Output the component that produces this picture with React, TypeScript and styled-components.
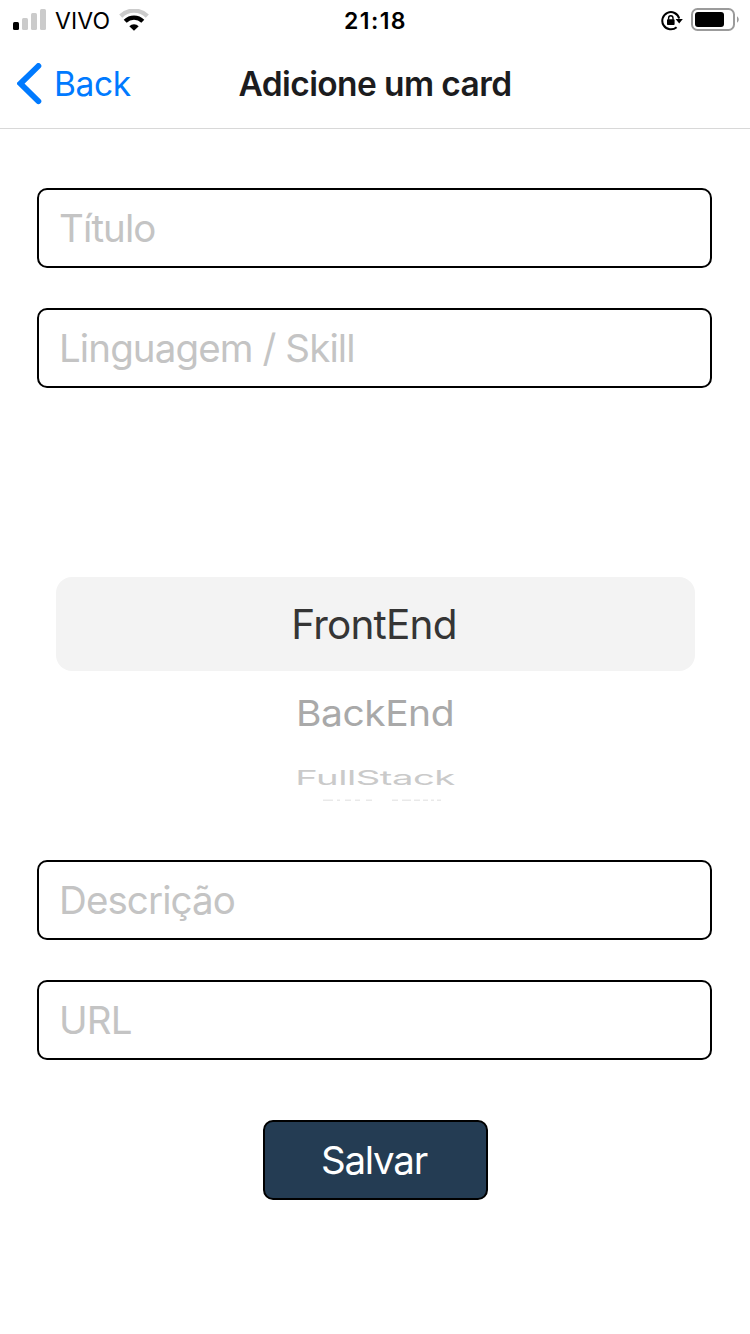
import React from "react";
import styled, { createGlobalStyle } from "styled-components";

const GlobalStyle = createGlobalStyle`
  * { box-sizing: border-box; }
  body {
    margin: 0;
    background: #fff;
    font-family: Inter, "Liberation Sans", sans-serif;
  }
`;

const Screen = styled.div`
  width: 750px;
  height: 1334px;
  display: flex;
  flex-direction: column;
  background: #fff;
  overflow: hidden;
`;

const StatusBar = styled.header`
  height: 40px;
  display: grid;
  grid-template-columns: 1fr auto 1fr;
  align-items: center;
  padding: 0 11px 0 13px;
  color: #000;
`;

const StatusGroup = styled.div<{ $end?: boolean }>`
  display: flex;
  align-items: center;
  justify-content: ${(p) => (p.$end ? "flex-end" : "flex-start")};
  gap: ${(p) => (p.$end ? 8 : 9)}px;
`;

const Carrier = styled.span`
  padding-top: 2px;
  font-size: 23px;
  line-height: 38px;
  letter-spacing: 0.1px;
`;

const Clock = styled.time`
  padding: 2px 1px 0 0;
  font-size: 23px;
  font-weight: 600;
  line-height: 38px;
  letter-spacing: 1.4px;
`;

const NavBar = styled.nav`
  height: 89px;
  display: grid;
  grid-template-columns: 1fr auto 1fr;
  align-items: center;
  padding: 0 17px 1px;
  border-bottom: 1px solid #d8d8d8;
`;

const BackButton = styled.button`
  display: flex;
  align-items: center;
  gap: 12px;
  padding: 0;
  border: 0;
  background: none;
  color: #007aff;
  font: 400 33.5px/44px Inter, sans-serif;
  letter-spacing: -0.4px;
`;

const Title = styled.h1`
  margin: 0;
  color: #1c1c1e;
  font-size: 33.5px;
  line-height: 44px;
  font-weight: 600;
  letter-spacing: -0.6px;
`;

const Form = styled.form`
  display: flex;
  flex-direction: column;
  gap: 40px;
  padding: 59px 38px 0 37px;
`;

const Field = styled.input`
  width: 100%;
  height: 80px;
  padding: 0 20px 1px;
  border: 2px solid #000;
  border-radius: 10px;
  background: #fff;
  color: #000;
  font: 400 38.5px/48px Inter, sans-serif;
  letter-spacing: -0.9px;
  outline: none;
  &::placeholder { color: #c4c4c4; opacity: 1; }
`;

const Picker = styled.div`
  height: 392px;
  margin: 0 17px 0 19px;
  padding-top: 149px;
  display: flex;
  flex-direction: column;
  text-align: center;
  white-space: nowrap;
`;

const Selected = styled.div`
  height: 94px;
  padding-right: 3px;
  border-radius: 16px;
  background: #f3f3f3;
  color: #353535;
  font-size: 40.5px;
  line-height: 95px;
  letter-spacing: -0.8px;
`;

const Option = styled.div<{ $height: number; $squash: number; $wide: number; $tone: string }>`
  height: ${(p) => p.$height}px;
  padding-right: 1px;
  display: flex;
  align-items: center;
  justify-content: center;
  color: ${(p) => p.$tone};
  font-size: 40px;
  line-height: 48px;
  letter-spacing: -0.5px;
  transform: scale(${(p) => p.$wide}, ${(p) => p.$squash});
`;

const Save = styled.button`
  align-self: center;
  width: 225px;
  height: 80px;
  margin: 20px 0 0 1px;
  padding: 0 2px 0 0;
  border: 2px solid #000;
  border-radius: 10px;
  background: #243c53;
  color: #fff;
  font: 400 38.5px/48px Inter, sans-serif;
  letter-spacing: -1.2px;
`;

const WheelEdge = styled.svg`
  align-self: center;
  margin: 0 0 0 12px;
`;

const Signal = () => (
  <svg width="33" height="22" viewBox="0 0 33 22">
    <rect x="0" y="13" width="6" height="8" rx="1.5" fill="#000" />
    <rect x="9" y="9" width="6" height="12" rx="1.5" fill="#cbcbcb" />
    <rect x="18" y="4" width="6" height="17" rx="1.5" fill="#cbcbcb" />
    <rect x="27" y="0" width="6" height="21" rx="1.5" fill="#cbcbcb" />
  </svg>
);

const Wifi = () => (
  <svg width="30" height="22" viewBox="0 0 30 22" fill="none">
    <path d="M1.7 7.1a19 19 0 0 1 26.6 0" stroke="#cbcbcb" strokeWidth="4.4" />
    <path d="M6.2 12.3a12.5 12.5 0 0 1 17.6 0" stroke="#000" strokeWidth="4.2" />
    <path d="M10.3 17.2a6.8 6.8 0 0 1 9.4 0L15 21.8z" fill="#000" />
  </svg>
);

const RotationLock = () => (
  <svg width="22" height="21" viewBox="0 0 22 21" fill="none">
    <path d="M15.6 17.2A8.6 8.6 0 1 1 18.2 8.5" stroke="#000" strokeWidth="2" />
    <path d="M14.6 9h7.2l-3.6 4.6z" fill="#000" />
    <rect x="6" y="9.2" width="7.6" height="5.8" rx="0.8" fill="#000" />
    <path d="M7.6 9.8V8a2.2 2.2 0 0 1 4.4 0v1.8" stroke="#000" strokeWidth="1.4" />
  </svg>
);

const Battery = () => (
  <svg width="48" height="24" viewBox="0 0 48 24" fill="none">
    <rect x="1" y="1" width="42" height="21" rx="5.5" stroke="#9b9b9b" strokeWidth="2" />
    <rect x="4" y="4" width="29" height="15" rx="3" fill="#000" />
    <path d="M46 8.2c2.3 1.6 2.3 5 0 6.6z" fill="#9b9b9b" />
  </svg>
);

const Chevron = () => (
  <svg width="25" height="42" viewBox="0 0 25 42" fill="none">
    <path d="M21.4 3L3.4 20.6l18 17.6" stroke="#007aff" strokeWidth="5.8" strokeLinecap="round" strokeLinejoin="miter" />
  </svg>
);

export default function App() {
  return (
    <Screen>
      <GlobalStyle />
      <StatusBar>
        <StatusGroup>
          <Signal />
          <Carrier>VIVO</Carrier>
          <Wifi />
        </StatusGroup>
        <Clock>21:18</Clock>
        <StatusGroup $end>
          <RotationLock />
          <Battery />
        </StatusGroup>
      </StatusBar>
      <NavBar>
        <BackButton type="button">
          <Chevron />
          Back
        </BackButton>
        <Title>Adicione um card</Title>
      </NavBar>
      <Form>
        <Field placeholder="Título" />
        <Field placeholder="Linguagem / Skill" />
        <Picker>
          <Selected>FrontEnd</Selected>
          <Option $height={86} $squash={0.89} $wide={0.975} $tone="#a9a9a9">BackEnd</Option>
          <Option $height={41} $squash={0.5} $wide={0.955} $tone="#cacaca">FullStack</Option>
          {/* Top edge of the next option, almost turned away at the rim of the wheel */}
          <WheelEdge width="122" height="4" viewBox="0 0 122 4">
            <path
              d="M2 2.3h10M16 2.3h3M24 2.3h6M34 2.3h5M45 2.3h6M71 2.3h6M81 2.3h9M93 2.3h6M102 2.3h5M110 2.3h3M116 2.3h4"
              stroke="#e9e9e9"
              strokeWidth="1.4"
            />
          </WheelEdge>
        </Picker>
        <Field placeholder="Descrição" />
        <Field placeholder="URL" />
        <Save type="button">Salvar</Save>
      </Form>
    </Screen>
  );
}
